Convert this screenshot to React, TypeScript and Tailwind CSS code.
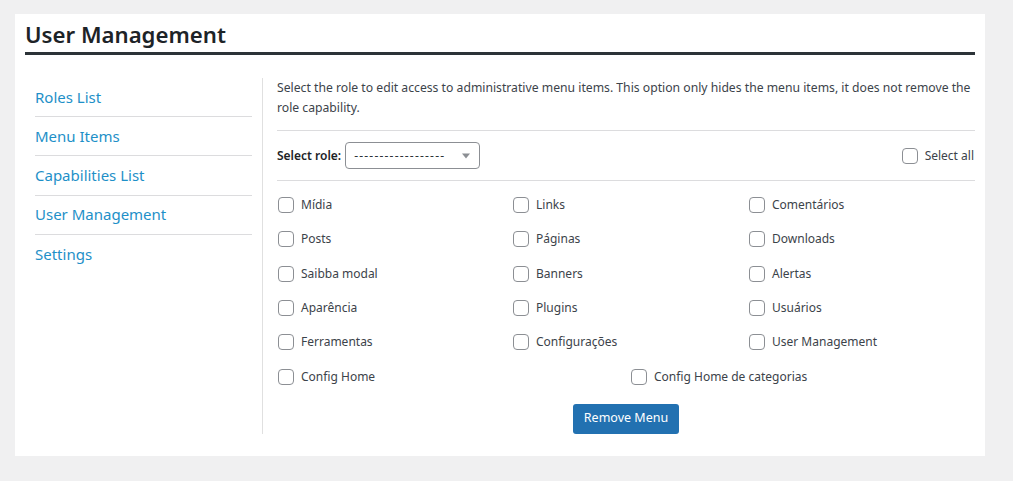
import React from 'react';

const sideLinks = ['Roles List', 'Menu Items', 'Capabilities List', 'User Management', 'Settings'];

const menuRows: string[][] = [
    ['Mídia', 'Links', 'Comentários'],
    ['Posts', 'Páginas', 'Downloads'],
    ['Saibba modal', 'Banners', 'Alertas'],
    ['Aparência', 'Plugins', 'Usuários'],
    ['Ferramentas', 'Configurações', 'User Management'],
];

const Check: React.FC<{ label: string }> = ({ label }) => (
    <label className="flex items-center gap-[7px] text-[12px] text-[#3c434a]">
        <span className="w-4 h-4 rounded-[4px] border border-[#8c8f94] bg-white shrink-0" />
        <span>{label}</span>
    </label>
);

const App: React.FC = () => {
    return (
        <div
            className="min-h-[481px] bg-[#f0f0f1] pt-[14px] pl-[15px] pr-[28px]"
            style={{ fontFamily: '"Noto Sans", "Open Sans", sans-serif' }}
        >
            <div className="bg-white w-[970px] px-[10px] pt-[6px] pb-[22px]">
                <h1 className="text-[22.2px] font-semibold text-[#1d2327] leading-[30px] pb-[2px] border-b-[3px] border-[#2c3338]">
                    User Management
                </h1>
                <div className="flex mt-[23px]">
                    <div className="w-[238px] pl-[10px] pr-[10px] border-r border-[#e0e0e0]">
                        {sideLinks.map((link, i) => (
                            <div
                                key={link}
                                className={`h-[39.2px] flex items-center text-[15px] text-[#1e90c8] ${i < sideLinks.length - 1 ? 'border-b border-[#dcdcde]' : ''}`}
                            >
                                {link}
                            </div>
                        ))}
                    </div>
                    <div className="flex-1 pl-[14px]">
                        <p className="text-[12.2px] leading-[20px] text-[#3c434a] pb-[12px] border-b border-[#dcdcde]">
                            Select the role to edit access to administrative menu items. This option only hides the menu items, it does not remove the role capability.
                        </p>
                        <div className="flex items-center justify-between h-[50px] border-b border-[#dcdcde]">
                            <div className="flex items-center gap-[4px]">
                                <span className="text-[12px] font-semibold text-[#1d2327]">Select role:</span>
                                <div className="w-[135px] h-[27px] border border-[#8c8f94] rounded-[4px] flex items-center justify-between pl-[8px] pr-[8px] text-[12px] text-[#2c3338]">
                                    <span className="tracking-[1.2px]">------------------</span>
                                    <svg width="10" height="6" viewBox="0 0 10 6">
                                        <path d="M1 0.5 L9 0.5 L5 5.5 Z" fill="#8c8f94" />
                                    </svg>
                                </div>
                            </div>
                            <div className="pr-[1px]">
                                <Check label="Select all" />
                            </div>
                        </div>
                        <div className="pt-[7px]">
                            {menuRows.map((row) => (
                                <div key={row[0]} className="grid grid-cols-[235px_236px_1fr] h-[34.3px] items-center">
                                    {row.map((item) => (
                                        <div key={item} className="pl-[1px]">
                                            <Check label={item} />
                                        </div>
                                    ))}
                                </div>
                            ))}
                            <div className="flex h-[34.3px] items-center pl-[1px]">
                                <div className="w-[353px]">
                                    <Check label="Config Home" />
                                </div>
                                <Check label="Config Home de categorias" />
                            </div>
                        </div>
                        <div className="flex justify-center mt-[10px]">
                            <button className="h-[30px] px-[11px] rounded-[3px] bg-[#2271b1] text-white text-[12.5px]">
                                Remove Menu
                            </button>
                        </div>
                    </div>
                </div>
            </div>
        </div>
    );
};

export default App;
